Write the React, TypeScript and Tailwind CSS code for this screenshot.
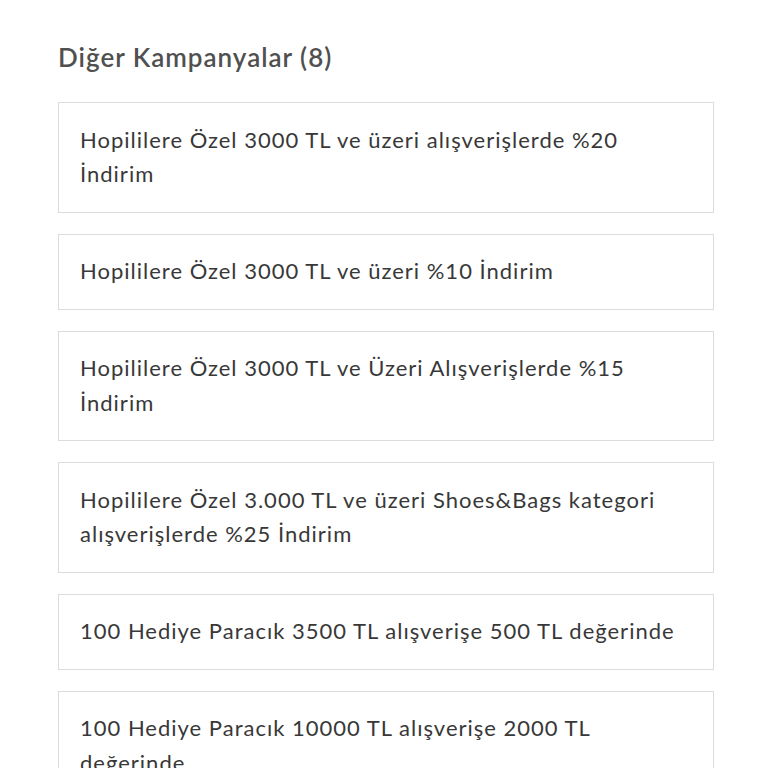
const campaigns = [
  "Hopililere Özel 3000 TL ve üzeri alışverişlerde %20 İndirim",
  "Hopililere Özel 3000 TL ve üzeri %10 İndirim",
  "Hopililere Özel 3000 TL ve Üzeri Alışverişlerde %15 İndirim",
  "Hopililere Özel 3.000 TL ve üzeri Shoes&Bags kategori alışverişlerde %25 İndirim",
  "100 Hediye Paracık 3500 TL alışverişe 500 TL değerinde",
  "100 Hediye Paracık 10000 TL alışverişe 2000 TL değerinde",
  "100 Hediye Paracık 5000 TL alışverişe 1000 TL değerinde",
  "Hopililere Özel Kargo Bedava",
];

export default function App() {
  return (
    <div className="min-h-screen bg-white font-['Lato',sans-serif]">
      <div className="pl-[58px] pr-[54px] pt-[40px]">
        {/* Header */}
        <h2 className="text-[26px] font-semibold leading-[34px] tracking-[1px] text-[#505050]">
          Diğer Kampanyalar (8)
        </h2>

        {/* Campaign list */}
        <div className="mt-[28px] flex flex-col gap-[21px]">
          {campaigns.map((c) => (
            <div
              key={c}
              className="border border-[#dcdcdc] bg-white px-[21px] py-[19.75px]"
            >
              <p className="text-[22px] leading-[34.5px] tracking-[1px] text-[#383838]">{c}</p>
            </div>
          ))}
        </div>
      </div>
    </div>
  );
}
